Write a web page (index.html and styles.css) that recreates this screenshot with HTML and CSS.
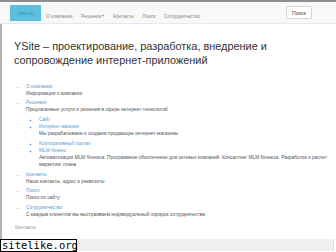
FILE: index.html
```html
<!DOCTYPE html>
<html lang="ru">
<head>
<meta charset="utf-8">
<title>YSite</title>
<link rel="stylesheet" href="styles.css">
</head>
<body>
<div class="page">
  <nav class="navbar">
    <a class="brand" href="#">ysite.ru</a>
    <ul class="nav">
      <li><a href="#">О компании</a></li>
      <li><a href="#">Решения <span class="caret"></span></a></li>
      <li><a href="#">Контакты</a></li>
      <li><a href="#">Поиск</a></li>
      <li><a href="#">Сотрудничество</a></li>
    </ul>
    <button class="search-btn">Поиск</button>
  </nav>
  <main class="content">
    <h1 class="title">YSite – проектирование, разработка, внедрение и сопровождение интернет-приложений</h1>
    <ul class="tree">
      <li><a href="#">О компании</a><p>Информация о компании</p></li>
      <li><a href="#">Решения</a><p>Предлагаемые услуги и решения в сфере интернет-технологий</p>
        <ul class="sub">
          <li><a href="#">Сайт</a></li>
          <li><a href="#">Интернет магазин</a><p>Мы разрабатываем и создаем продающие интернет-магазины</p></li>
          <li class="gap"><a href="#">Корпоративный портал</a></li>
          <li><a href="#">MLM бизнес</a><p>Автоматизация MLM бизнеса. Программное обеспечение для сетевых компаний. Консалтинг MLM бизнеса. Разработка и расчет маркетинг плана</p></li>
        </ul>
      </li>
      <li><a href="#">Контакты</a><p>Наши контакты, адрес и реквизиты</p></li>
      <li><a href="#">Поиск</a><p>Поиск по сайту</p></li>
      <li><a href="#">Сотрудничество</a><p>С каждым клиентом мы выстраиваем индивидуальный порядок сотрудничества</p></li>
    </ul>
    <div class="foot-link">Контакты</div>
  </main>
  <div class="footer-bar"></div>
  <div class="watermark">sitelike.org</div>
</div>
</body>
</html>
```
FILE: styles.css
```css
* { box-sizing: border-box; }
html, body { margin: 0; padding: 0; background: #fff; }
body { font-family: "Liberation Sans", Arial, sans-serif; color: #333; }
.page { position: relative; width: 336px; height: 252px; overflow: hidden; }

.navbar {
  height: 24px;
  background: #f8f8f8;
  border-top: 2px solid #8e8e8e;
  border-bottom: 1px solid #e8e8e8;
  display: flex;
  align-items: center;
  padding-left: 10px;
  padding-right: 24px;
}
.brand {
  width: 31px; height: 16px;
  background: #5bc0de;
  color: #3d8fae;
  font-size: 5px;
  text-decoration: none;
  display: flex; align-items: center; justify-content: center;
}
.nav { list-style: none; margin: 0 0 0 5px; padding: 0; display: flex; gap: 8.5px; }
.nav a { color: #888; font-size: 4.8px; text-decoration: none; }
.caret {
  display: inline-block; width: 0; height: 0;
  border-left: 1.5px solid transparent; border-right: 1.5px solid transparent;
  border-top: 2px solid #888; vertical-align: middle;
}
.search-btn {
  margin-left: auto;
  width: 26px; height: 13px;
  background: #fff;
  border: 1px solid #d4d4d4;
  border-radius: 1px;
  font-family: "Liberation Sans", Arial, sans-serif;
  font-size: 5px; color: #444; padding: 0;
}

.content {
  border-left: 2px solid #b4b4b4;
  padding: 16px 4px 0 12px;
  height: 215px;
}
.title {
  margin: 0;
  font-size: 10.9px;
  line-height: 13.5px;
  font-weight: normal;
  color: #333;
}
.tree {
  margin: 16px 0 0 0;
  padding-left: 12px;
  font-size: 4.8px;
  line-height: 7px;
}
.tree li { margin-bottom: 2.4px; }
.tree a { color: #5b9bd5; text-decoration: none; }
.tree p { margin: 0; color: #555; }
.sub { padding-left: 13px; margin: 3px 0 0 0; }
.sub li { margin-bottom: 0; }
.sub li.gap { margin-top: 3px; }
.tree li::marker { color: #5b9bd5; }
.foot-link { margin-top: 7px; font-size: 4.8px; color: #999; padding-left: 1px; }

.footer-bar {
  height: 12px;
  margin-right: 2px;
  background: #efefef;
  border-right: 1px solid #dcdcdc;
}
.watermark {
  position: absolute; left: 0; bottom: 0;
  width: 77px; height: 13px;
  background: #fff;
  border: 1px solid #000;
  font-family: "DejaVu Sans Mono", monospace;
  font-size: 10.5px; line-height: 11px;
  color: #000; padding-left: 1px;
}
```
